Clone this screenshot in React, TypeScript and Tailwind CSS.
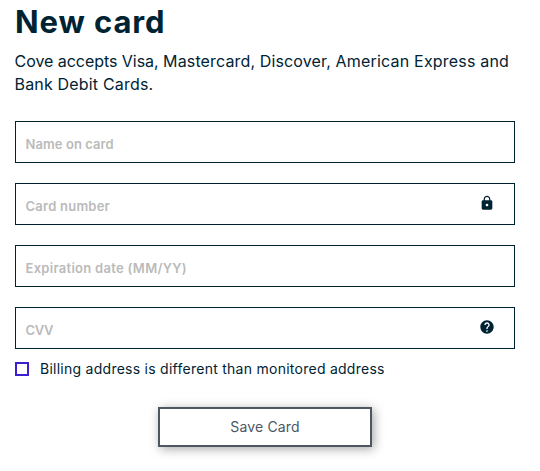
import { MdHelp, MdLock } from "react-icons/md";
import type { ReactNode } from "react";

type FieldProps = { label: ReactNode; icon?: ReactNode };

function Field({ label, icon }: FieldProps) {
  return (
    <div className="flex h-[42px] w-[500px] justify-between border border-[#002333] pr-[19px] pl-[9.5px]">
      <div className="pt-[12px] text-[13px] leading-5 font-semibold whitespace-nowrap text-[#bababa]">{label}</div>
      {icon && <div className="pt-[11px] text-[#002333]">{icon}</div>}
    </div>
  );
}

export default function App() {
  return (
    <main className="h-[471px] w-[540px] overflow-hidden bg-white pl-[15px] font-['Inter',sans-serif] text-[#002333]">
      <h1 className="pt-[2px] text-[31px] leading-[40px] font-bold whitespace-nowrap">
        <span className="tracking-[0.9px]">New card</span>
      </h1>
      <p className="mt-2 -ml-[0.5px] text-[16px] leading-[23px] whitespace-nowrap">
        <span className="tracking-[-0.04px]">Cove accepts Visa, </span>
        <span className="tracking-[0.14px]">Mastercard, Discover, </span>
        <span className="tracking-[0.19px]">American Express and</span>
        <br />
        <span className="tracking-[0.18px]">Bank Debit Cards.</span>
      </p>
      <div className="mt-[25px] flex flex-col gap-5">
        <Field label={<span className="tracking-[0.08px]">Name on card</span>} />
        <Field label={<span className="tracking-[0.24px]">Card number</span>} icon={<MdLock size={16} />} />
        <Field label={<span className="tracking-[0.29px]">Expiration date (MM/YY)</span>} />
        <Field label={<span className="tracking-[-0.4px]">CVV</span>} icon={<MdHelp size={16} />} />
      </div>
      <div className="mt-[10px] flex h-5 items-center gap-[11px] text-[14px] leading-5 whitespace-nowrap">
        <div className="size-[14px] border-2 border-[#3d1fd1]" />
        <span className="tracking-[0.26px]">Billing address is different than monitored address</span>
      </div>
      <button className="mt-7 ml-[143px] flex h-10 w-[214px] items-center justify-center border-2 border-[#4d5663] bg-white pb-[2px] text-[14px] text-[#4d5663] shadow-[2px_2px_10px_rgba(0,0,0,0.35)]">
        <span className="tracking-[0.15px]">Save Card</span>
      </button>
    </main>
  );
}
